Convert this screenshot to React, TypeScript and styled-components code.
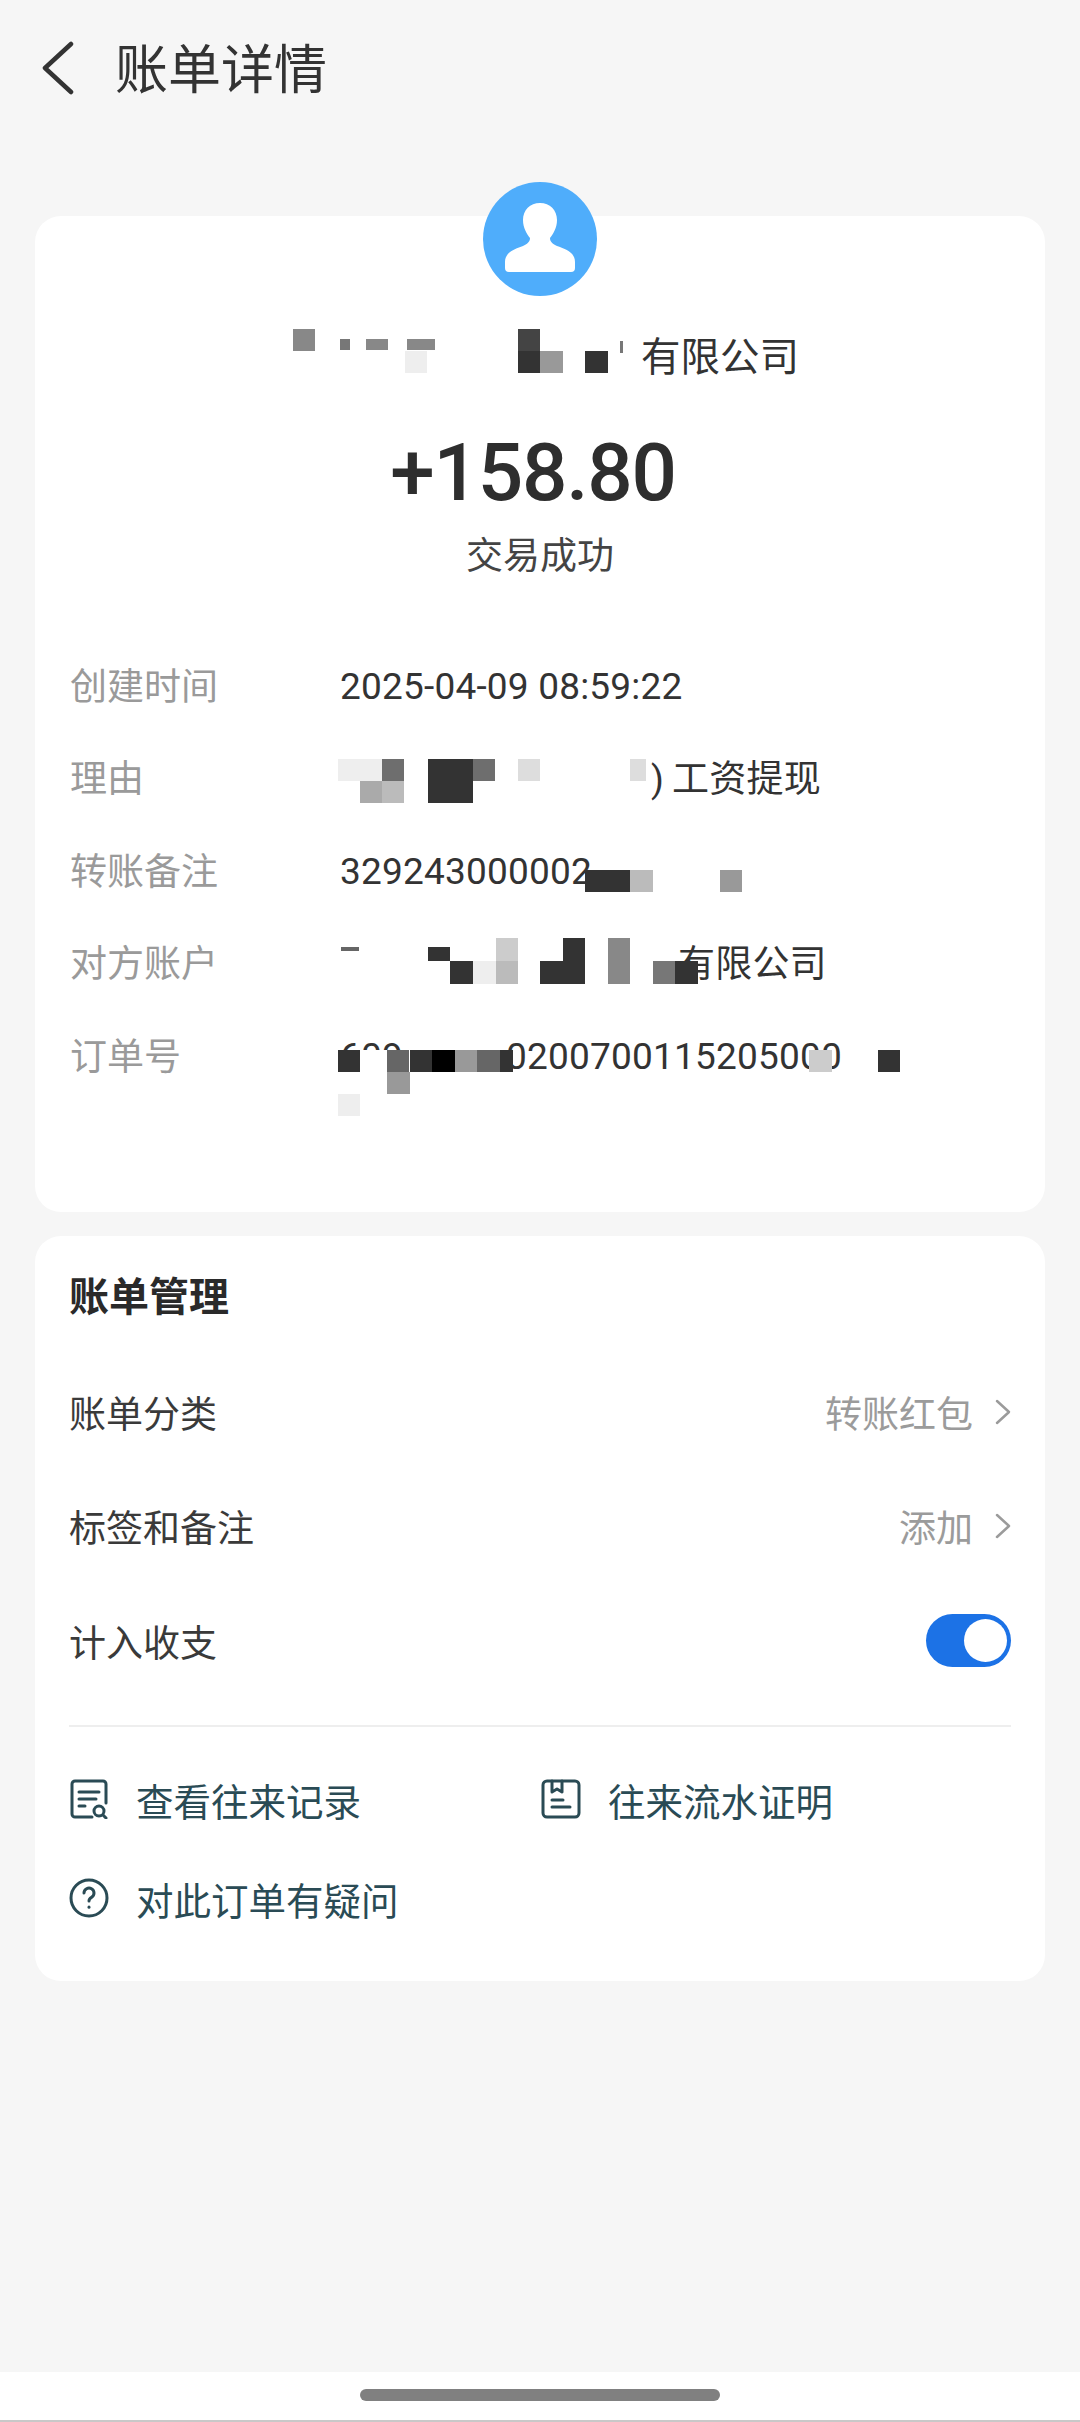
import React from "react"
import styled, { createGlobalStyle } from "styled-components"

const GlobalStyle = createGlobalStyle`
  html, body {
    margin: 0;
    padding: 0;
    background: #f6f6f6;
  }
  body {
    font-family: Roboto, "Noto Sans CJK SC", sans-serif;
    color: #333;
  }
  * { box-sizing: border-box; }
`

const Page = styled.div`
  width: 1080px;
  height: 2422px;
  display: flex;
  flex-direction: column;
  overflow: hidden;
`

const Main = styled.main`
  flex: 1;
  padding: 0 35px;
`

const Header = styled.header`
  height: 136px;
  display: flex;
  align-items: center;
  gap: 40px;
  padding-left: 6px;
`

const Title = styled.h1`
  margin: 6px 0 0;
  font-size: 53px;
  line-height: 64px;
  font-weight: 400;
  color: #333;
`

const Card = styled.section`
  position: relative;
  background: #fff;
  border-radius: 26px;
`

const SummaryCard = styled(Card)`
  margin-top: 80px;
  height: 996px;
  padding-top: 112px;
`

const Avatar = styled.svg`
  position: absolute;
  top: -34px;
  left: 448px;
  width: 114px;
  height: 114px;
`

const PayerName = styled.div`
  position: relative;
  height: 60px;
  display: flex;
  justify-content: flex-end;
  align-items: center;
  padding-right: 246px;
  font-size: 39.5px;
  line-height: 60px;
  color: #333;
`

const Amount = styled.div`
  margin-top: 38px;
  padding-right: 14px;
  text-align: center;
  font-size: 80px;
  line-height: 94px;
  font-weight: 500;
  letter-spacing: -1.2px;
  color: #2e2e2e;
`

const Status = styled.div`
  margin-top: 12px;
  text-align: center;
  font-size: 37px;
  line-height: 50px;
  color: #444;
`

const DetailList = styled.div`
  margin-top: 58px;
  padding-left: 35px;
`

const DetailRow = styled.div`
  height: 92.5px;
  display: flex;
  align-items: center;
`

const Label = styled.div`
  width: 270px;
  margin-bottom: 5px;
  font-size: 37px;
  color: #9a9a9a;
`

const Value = styled.div`
  position: relative;
  flex: 1;
  height: 100%;
  display: flex;
  align-items: center;
  font-size: 37px;
  letter-spacing: 0.2px;
  color: #333;
  white-space: nowrap;
`

const Words = styled.span<{ $left: number }>`
  margin: 0 0 5px ${({ $left }) => $left}px;
`

const Gap = styled.span<{ $w: number }>`
  display: inline-block;
  width: ${({ $w }) => $w}px;
`

const Tile = styled.i<{ $x: number; $y: number; $w: number; $h: number; $c: string }>`
  position: absolute;
  left: ${({ $x }) => $x}px;
  top: ${({ $y }) => $y}px;
  width: ${({ $w }) => $w}px;
  height: ${({ $h }) => $h}px;
  background: ${({ $c }) => $c};
`

const ManageCard = styled(Card)`
  margin-top: 24px;
  height: 745px;
  padding: 0 34px;
`

const ManageTitle = styled.h2`
  margin: 0;
  padding-top: 38px;
  font-size: 40px;
  line-height: 48px;
  font-weight: 700;
  color: #2a2a2a;
`

const ManageList = styled.div`
  margin-top: 33px;
  padding-bottom: 27px;
  border-bottom: 2px solid #eeeeee;
`

const ManageRow = styled.div`
  height: 114.3px;
  display: flex;
  align-items: center;
  justify-content: space-between;
  font-size: 37px;
  color: #3a3a3a;
`

const Trail = styled.div`
  display: flex;
  align-items: center;
  gap: 22px;
  color: #9b9b9b;
`

const Toggle = styled.div`
  position: relative;
  width: 85px;
  height: 53px;
  border-radius: 27px;
  background: #1c72e6;
`

const Knob = styled.span`
  position: absolute;
  top: 5px;
  right: 4px;
  width: 43px;
  height: 43px;
  border-radius: 50%;
  background: #fff;
`

const Links = styled.div`
  display: grid;
  grid-template-columns: 472px 1fr;
  grid-auto-rows: 99px;
  padding-top: 23px;
`

const LinkItem = styled.div`
  display: flex;
  align-items: center;
  gap: 27px;
  font-size: 37.5px;
  color: #2a4b55;
`

const LinkIcon = styled.svg`
  width: 40px;
  height: 40px;
  fill: none;
  stroke: #2a4b55;
  stroke-width: 3;
  stroke-linecap: round;
  stroke-linejoin: round;
`

const HomeBar = styled.div`
  height: 50px;
  background: #fff;
  border-bottom: 2px solid #c8c8c8;
  display: flex;
  justify-content: center;
  padding-top: 17px;
`

const HomePill = styled.div`
  width: 360px;
  height: 12px;
  border-radius: 6px;
  background: #808080;
`

type T = [number, number, number, number, string]

const nameTiles: T[] = [
  [258, 1, 22, 22, "#888"],
  [305, 11, 10, 11, "#777"],
  [331, 11, 22, 11, "#888"],
  [372, 11, 28, 11, "#888"],
  [370, 23, 22, 22, "#eee"],
  [483, 1, 22, 22, "#444"],
  [483, 23, 22, 22, "#333"],
  [505, 23, 23, 22, "#999"],
  [550, 23, 23, 22, "#333"],
  [585, 13, 3, 12, "#777"],
]

const reasonTiles: T[] = [
  [-2, 26, 44, 22, "#eee"],
  [42, 26, 22, 22, "#6e6e6e"],
  [20, 48, 22, 22, "#aaa"],
  [42, 48, 22, 22, "#bbb"],
  [88, 26, 45, 44, "#333"],
  [133, 26, 22, 22, "#6e6e6e"],
  [178, 26, 22, 22, "#ddd"],
  [290, 26, 16, 22, "#ddd"],
]

const noteTiles: T[] = [
  [245, 45, 45, 22, "#333"],
  [290, 45, 23, 22, "#bbb"],
  [380, 45, 22, 22, "#999"],
]

const accountTiles: T[] = [
  [1, 29, 18, 4, "#666"],
  [88, 29, 22, 14, "#333"],
  [110, 43, 23, 23, "#333"],
  [133, 43, 23, 23, "#eee"],
  [156, 20, 22, 23, "#ccc"],
  [156, 43, 22, 23, "#bbb"],
  [200, 43, 23, 23, "#333"],
  [223, 20, 22, 46, "#333"],
  [268, 20, 22, 46, "#888"],
  [313, 43, 22, 23, "#777"],
  [335, 43, 23, 23, "#333"],
]

const orderTiles: T[] = [
  [-2, 40, 22, 22, "#333"],
  [20, 40, 27, 24, "#fff"],
  [47, 40, 22, 22, "#666"],
  [70, 40, 22, 22, "#333"],
  [92, 40, 23, 22, "#000"],
  [115, 40, 22, 22, "#999"],
  [137, 40, 23, 22, "#666"],
  [160, 40, 13, 22, "#333"],
  [47, 62, 23, 22, "#999"],
  [469, 40, 23, 22, "#ccc"],
  [538, 40, 22, 22, "#333"],
  [-2, 84, 22, 22, "#eee"],
]

const tiles = (list: T[]) =>
  list.map(([x, y, w, h, c], i) => <Tile key={i} $x={x} $y={y} $w={w} $h={h} $c={c} />)

const Chevron = () => (
  <svg width="16" height="26" viewBox="0 0 16 26" fill="none" stroke="#9b9b9b" strokeWidth="2.5" strokeLinecap="round" strokeLinejoin="round">
    <path d="M2 2l12 11L2 24" />
  </svg>
)

export default function App() {
  return (
    <Page>
      <GlobalStyle />
      <Main>
        <Header>
          <svg width="34" height="54" viewBox="0 0 34 54" fill="none" stroke="#333" strokeWidth="4.5" strokeLinecap="round" strokeLinejoin="round">
            <path d="M30 3L4 27l26 24" />
          </svg>
          <Title>账单详情</Title>
        </Header>

        <SummaryCard>
          <Avatar viewBox="0 0 114 114">
            <circle cx="57" cy="57" r="57" fill="#4fadfb" />
            <path
              fill="#fff"
              d="M57 21C47 21 40 28 40 38C40 46 44 52 47 56C47 60 44 62 40 64C32 67 22 70 22 80V86Q22 90 26 90H88Q92 90 92 86V80C92 70 82 67 74 64C70 62 67 60 67 56C70 52 74 46 74 38C74 28 67 21 57 21Z"
            />
          </Avatar>
          <PayerName>
            {tiles(nameTiles)}
            有限公司
          </PayerName>
          <Amount>+158.80</Amount>
          <Status>交易成功</Status>

          <DetailList>
            <DetailRow>
              <Label>创建时间</Label>
              <Value>2025-04-09 08:59:22</Value>
            </DetailRow>
            <DetailRow>
              <Label>理由</Label>
              <Value>
                {tiles(reasonTiles)}
                <Words $left={311}>)<Gap $w={8} />工资提现</Words>
              </Value>
            </DetailRow>
            <DetailRow>
              <Label>转账备注</Label>
              <Value>
                329243000002
                {tiles(noteTiles)}
              </Value>
            </DetailRow>
            <DetailRow>
              <Label>对方账户</Label>
              <Value>
                {tiles(accountTiles)}
                <Words $left={338}>有限公司</Words>
              </Value>
            </DetailRow>
            <DetailRow>
              <Label>订单号</Label>
              <Value>
                609
                <Gap $w={103} />
                0200700115205000
                {tiles(orderTiles)}
              </Value>
            </DetailRow>
          </DetailList>
        </SummaryCard>

        <ManageCard>
          <ManageTitle>账单管理</ManageTitle>
          <ManageList>
            <ManageRow>
              账单分类
              <Trail>
                转账红包
                <Chevron />
              </Trail>
            </ManageRow>
            <ManageRow>
              标签和备注
              <Trail>
                添加
                <Chevron />
              </Trail>
            </ManageRow>
            <ManageRow>
              计入收支
              <Toggle>
                <Knob />
              </Toggle>
            </ManageRow>
          </ManageList>
          <Links>
            <LinkItem>
              <LinkIcon viewBox="0 0 40 40">
                <path d="M23 38H6a3 3 0 0 1-3-3V5a3 3 0 0 1 3-3h28a3 3 0 0 1 3 3v19" />
                <path d="M10 13h20M10 20h17M10 27h6" />
                <circle cx="30" cy="32" r="5" />
                <path d="M34 36l3 3" />
              </LinkIcon>
              查看往来记录
            </LinkItem>
            <LinkItem>
              <LinkIcon viewBox="0 0 40 40">
                <rect x="2" y="2" width="36" height="36" rx="4" />
                <path d="M11 2v11l5-3 5 3V2M11 21h11M11 28h18" />
              </LinkIcon>
              往来流水证明
            </LinkItem>
            <LinkItem>
              <LinkIcon viewBox="0 0 40 40">
                <circle cx="20" cy="20" r="18" />
                <path d="M15 15a5 5 0 1 1 7.5 4.4c-1.6.9-2.5 1.8-2.5 3.6" />
                <path d="M20 29v.2" />
              </LinkIcon>
              对此订单有疑问
            </LinkItem>
          </Links>
        </ManageCard>
      </Main>
      <HomeBar>
        <HomePill />
      </HomeBar>
    </Page>
  )
}
